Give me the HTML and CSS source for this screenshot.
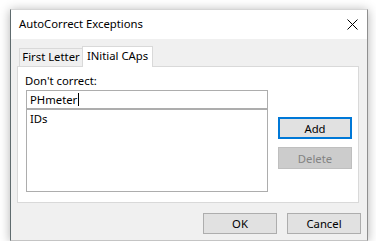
FILE: index.html
```html
<!DOCTYPE html>
<html lang="en">
<head>
    <meta charset="UTF-8">
    <title>AutoCorrect Exceptions</title>
    <link rel="stylesheet" href="styles.css">
</head>
<body>
    <div class="dialog">
        <header class="dialog__title">
            <span class="dialog__caption">AutoCorrect Exceptions</span>
            <svg class="dialog__close" width="11" height="11" viewBox="0 0 11 11">
                <path d="M0.5 0.5 L10.5 10.5 M10.5 0.5 L0.5 10.5" stroke="#000" stroke-width="1" fill="none"/>
            </svg>
        </header>
        <main class="dialog__body">
            <ul class="tabs">
                <li class="tabs__item">First Letter</li>
                <li class="tabs__item tabs__item_active">INitial CAps</li>
            </ul>
            <section class="panel">
                <div class="panel__main">
                    <p class="panel__label">Don't correct:</p>
                    <div class="field">PHmeter<span class="field__caret"></span></div>
                    <div class="list">
                        <p class="list__item">IDs</p>
                    </div>
                </div>
                <div class="panel__side">
                    <button class="button button_default">Add</button>
                    <button class="button button_disabled">Delete</button>
                </div>
            </section>
            <footer class="footer">
                <button class="button">OK</button>
                <button class="button">Cancel</button>
            </footer>
        </main>
    </div>
</body>
</html>
```

FILE: styles.css
```css
* {
    box-sizing: border-box;
}

body {
    margin: 0;
    background-color: #ffffff;
    font-family: "Noto Sans", sans-serif;
    font-size: 11.3px;
    color: #000000;
}

ul {
    list-style-type: none;
    padding: 0;
    margin: 0;
}

p {
    margin: 0;
}

.dialog {
    width: 358px;
    height: 232px;
    margin: 9px 0 0 10px;
    background-color: #f0f0f0;
    border-top: 1px solid #d6d6d6;
    border-left: 1px solid #5f6b6e;
    border-right: 1px solid #8f8f8f;
    border-bottom: 1px solid #c4c4c4;
    box-shadow: 0 1px 10px rgba(0, 0, 0, 0.3);
}

.dialog__title {
    height: 29px;
    background-color: #ffffff;
    display: flex;
    align-items: center;
    justify-content: space-between;
    padding: 0 9px 2px 8px;
}

.dialog__close {
    display: block;
    margin-top: 1px;
}

.dialog__body {
    padding: 7px 8px 6px 6px;
}

.tabs {
    display: flex;
    align-items: flex-end;
    margin: 0 0 -1px 2px;
    position: relative;
    z-index: 1;
}

.tabs__item {
    height: 19px;
    width: 64px;
    line-height: 16px;
    text-align: center;
    border: 1px solid #d9d9d9;
    background-color: #f0f0f0;
}

.tabs__item_active {
    height: 21px;
    width: 71px;
    margin-left: -1px;
    line-height: 18px;
    border-bottom: none;
    background-color: #ffffff;
}

.panel {
    height: 137px;
    display: flex;
    gap: 10px;
    padding: 6px 6px 0 8px;
    background-color: #ffffff;
    border: 1px solid #d9d9d9;
}

.panel__main {
    width: 242px;
}

.panel__label {
    line-height: 16px;
    margin: 0 0 1px -1px;
}

.field {
    height: 19px;
    line-height: 17px;
    padding-left: 3px;
    border: 1px solid #adadad;
    display: flex;
    align-items: center;
}

.field__caret {
    width: 1px;
    height: 13px;
    margin-left: 1px;
    background-color: #000000;
}

.list {
    height: 83px;
    padding: 1px 3px;
    border: 1px solid #adadad;
}

.list__item {
    line-height: 16px;
}

.panel__side {
    width: 74px;
    display: flex;
    flex-direction: column;
    gap: 8px;
    padding-top: 44px;
}

.button {
    width: 74px;
    height: 21px;
    padding: 0;
    font-family: inherit;
    font-size: 11.3px;
    color: #000000;
    background-color: #e1e1e1;
    border: 1px solid #adadad;
}

.panel__side .button {
    height: 22px;
}

.button_default {
    border: 2px solid #0078d7;
}

.button_disabled {
    color: #838383;
    background-color: #cccccc;
    border-color: #bfbfbf;
}

.footer {
    display: flex;
    justify-content: flex-end;
    gap: 10px;
    margin: 10px -2px 0 0;
}
```
